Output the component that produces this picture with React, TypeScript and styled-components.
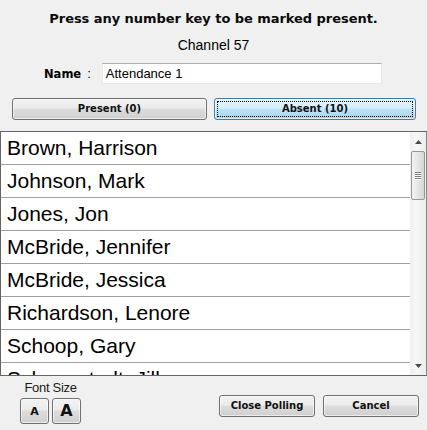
import React from "react";
import styled, { createGlobalStyle } from "styled-components";

const Global = createGlobalStyle`
  html, body { margin: 0; padding: 0; background: #f0f0f0; }
  body { width: 427px; height: 430px; overflow: hidden; }
`;

const Page = styled.div`
  width: 427px;
  height: 430px;
  display: flex;
  flex-direction: column;
  background: #f0f0f0;
  font-family: "Liberation Sans", Arial, sans-serif;
  color: #000;
`;

const Title = styled.div`
  margin-top: 9px;
  height: 20px;
  line-height: 20px;
  text-align: center;
  font-family: "DejaVu Sans", sans-serif;
  font-weight: bold;
  font-size: 13px;
  letter-spacing: -0.05px;
  color: #0a0a0a;
`;

const Channel = styled.div`
  margin-top: 8px;
  height: 16px;
  line-height: 16px;
  text-align: center;
  font-size: 14px;
`;

const NameRow = styled.div`
  margin-top: 10px;
  height: 21px;
  display: flex;
  align-items: center;
  padding-left: 44px;
`;

const NameLabel = styled.span`
  font-family: "DejaVu Sans", sans-serif;
  font-weight: bold;
  font-size: 11.5px;
`;

const Colon = styled.span`
  font-size: 13px;
  margin-left: 6px;
`;

const NameInput = styled.div`
  margin-left: 11px;
  width: 275px;
  height: 19px;
  background: #fff;
  border: 1px solid #e3e9ef;
  border-top-color: #abadb3;
  font-size: 13px;
  line-height: 19px;
  padding-left: 3px;
  box-sizing: content-box;
`;

const TabRow = styled.div`
  margin-top: 14px;
  display: flex;
  gap: 7px;
  padding-left: 12px;
`;

const Button = styled.div<{ $active?: boolean; $w: number; $h?: number; $size?: number }>`
  position: relative;
  box-sizing: border-box;
  width: ${(p) => p.$w}px;
  height: ${(p) => p.$h ?? 22}px;
  border: 1px solid ${(p) => (p.$active ? "#3c7fb1" : "#707070")};
  border-radius: 3px;
  background: ${(p) =>
    p.$active
      ? "linear-gradient(#e5f4fc 0%, #d6eefb 45%, #bee4f8 50%, #a3d3ef 100%)"
      : "linear-gradient(#f2f2f2 0%, #ebebeb 45%, #dddddd 50%, #cfcfcf 100%)"};
  box-shadow: inset 0 0 0 1px rgba(255, 255, 255, 0.6);
  display: flex;
  align-items: center;
  justify-content: center;
  font-family: "DejaVu Sans", sans-serif;
  font-weight: bold;
  font-size: ${(p) => p.$size ?? 10}px;
  line-height: 1;
  color: #111;
  ${(p) =>
    p.$active
      ? `&::after { content: ""; position: absolute; inset: 2px; border: 1px dotted #000; }`
      : ""}
`;

const List = styled.div`
  margin-top: 11px;
  height: 245px;
  box-sizing: border-box;
  border: 1px solid #646464;
  border-right-color: #828790;
  background: #fff;
  display: flex;
  overflow: hidden;
`;

const Rows = styled.div`
  flex: 1;
  overflow: hidden;
`;

const Row = styled.div`
  height: 33px;
  box-sizing: border-box;
  border-bottom: 1px solid #a0a0a0;
  line-height: 31px;
  padding-left: 6px;
  font-size: 21px;
  white-space: nowrap;
`;

const ScrollBar = styled.div`
  width: 16px;
  background: linear-gradient(90deg, #f0f0f0, #f7f7f7 40%, #ececec);
  display: flex;
  flex-direction: column;
  align-items: center;
`;

const Arrow = styled.div`
  height: 19px;
  width: 16px;
  display: flex;
  align-items: center;
  justify-content: center;
`;

const Thumb = styled.div`
  width: 14px;
  height: 49px;
  box-sizing: border-box;
  border: 1px solid #979797;
  border-radius: 2px;
  background: linear-gradient(90deg, #f3f3f3, #e6e6e6 50%, #d6d6d6);
  display: flex;
  flex-direction: column;
  align-items: center;
  justify-content: center;
  gap: 1px;
`;

const Grip = styled.div`
  width: 6px;
  height: 1px;
  background: #7a7a7a;
  box-shadow: 0 1px 0 #fff;
`;

const Track = styled.div`
  flex: 1;
`;

const Footer = styled.div`
  flex: 1;
  display: flex;
  justify-content: space-between;
  padding: 0 8px 0 20px;
`;

const FontGroup = styled.div`
  display: flex;
  flex-direction: column;
  align-items: center;
  padding-top: 4px;
`;

const FontLabel = styled.div`
  font-size: 13px;
  line-height: 16px;
  height: 16px;
  color: #1a1a1a;
  letter-spacing: -0.3px;
`;

const FontButtons = styled.div`
  margin-top: 2px;
  display: flex;
  gap: 3px;
`;

const Actions = styled.div`
  display: flex;
  gap: 8px;
  padding-top: 19px;
`;

const ArrowSvg = ({ up }: { up?: boolean }) => (
  <svg width="7" height="4" viewBox="0 0 7 4">
    <path d={up ? "M0 4 L3.5 0 L7 4 Z" : "M0 0 L3.5 4 L7 0 Z"} fill="#4a4a4a" />
  </svg>
);

const names = [
  "Brown, Harrison",
  "Johnson, Mark",
  "Jones, Jon",
  "McBride, Jennifer",
  "McBride, Jessica",
  "Richardson, Lenore",
  "Schoop, Gary",
  "Schoenstadt, Jill",
];

export default function App() {
  return (
    <Page>
      <Global />
      <Title>Press any number key to be marked present.</Title>
      <Channel>Channel 57</Channel>
      <NameRow>
        <NameLabel>Name</NameLabel>
        <Colon>:</Colon>
        <NameInput>Attendance 1</NameInput>
      </NameRow>
      <TabRow>
        <Button $w={195}>Present (0)</Button>
        <Button $w={202} $active>Absent (10)</Button>
      </TabRow>
      <List>
        <Rows>
          {names.map((n) => (
            <Row key={n}>{n}</Row>
          ))}
        </Rows>
        <ScrollBar>
          <Arrow>
            <ArrowSvg up />
          </Arrow>
          <Thumb>
            <Grip />
            <Grip />
            <Grip />
            <Grip />
          </Thumb>
          <Track />
          <Arrow>
            <ArrowSvg />
          </Arrow>
        </ScrollBar>
      </List>
      <Footer>
        <FontGroup>
          <FontLabel>Font Size</FontLabel>
          <FontButtons>
            <Button $w={29} $h={26} $size={11}>A</Button>
            <Button $w={29} $h={26} $size={16}>A</Button>
          </FontButtons>
        </FontGroup>
        <Actions>
          <Button $w={96} $h={22}>Close Polling</Button>
          <Button $w={96} $h={22}>Cancel</Button>
        </Actions>
      </Footer>
    </Page>
  );
}
